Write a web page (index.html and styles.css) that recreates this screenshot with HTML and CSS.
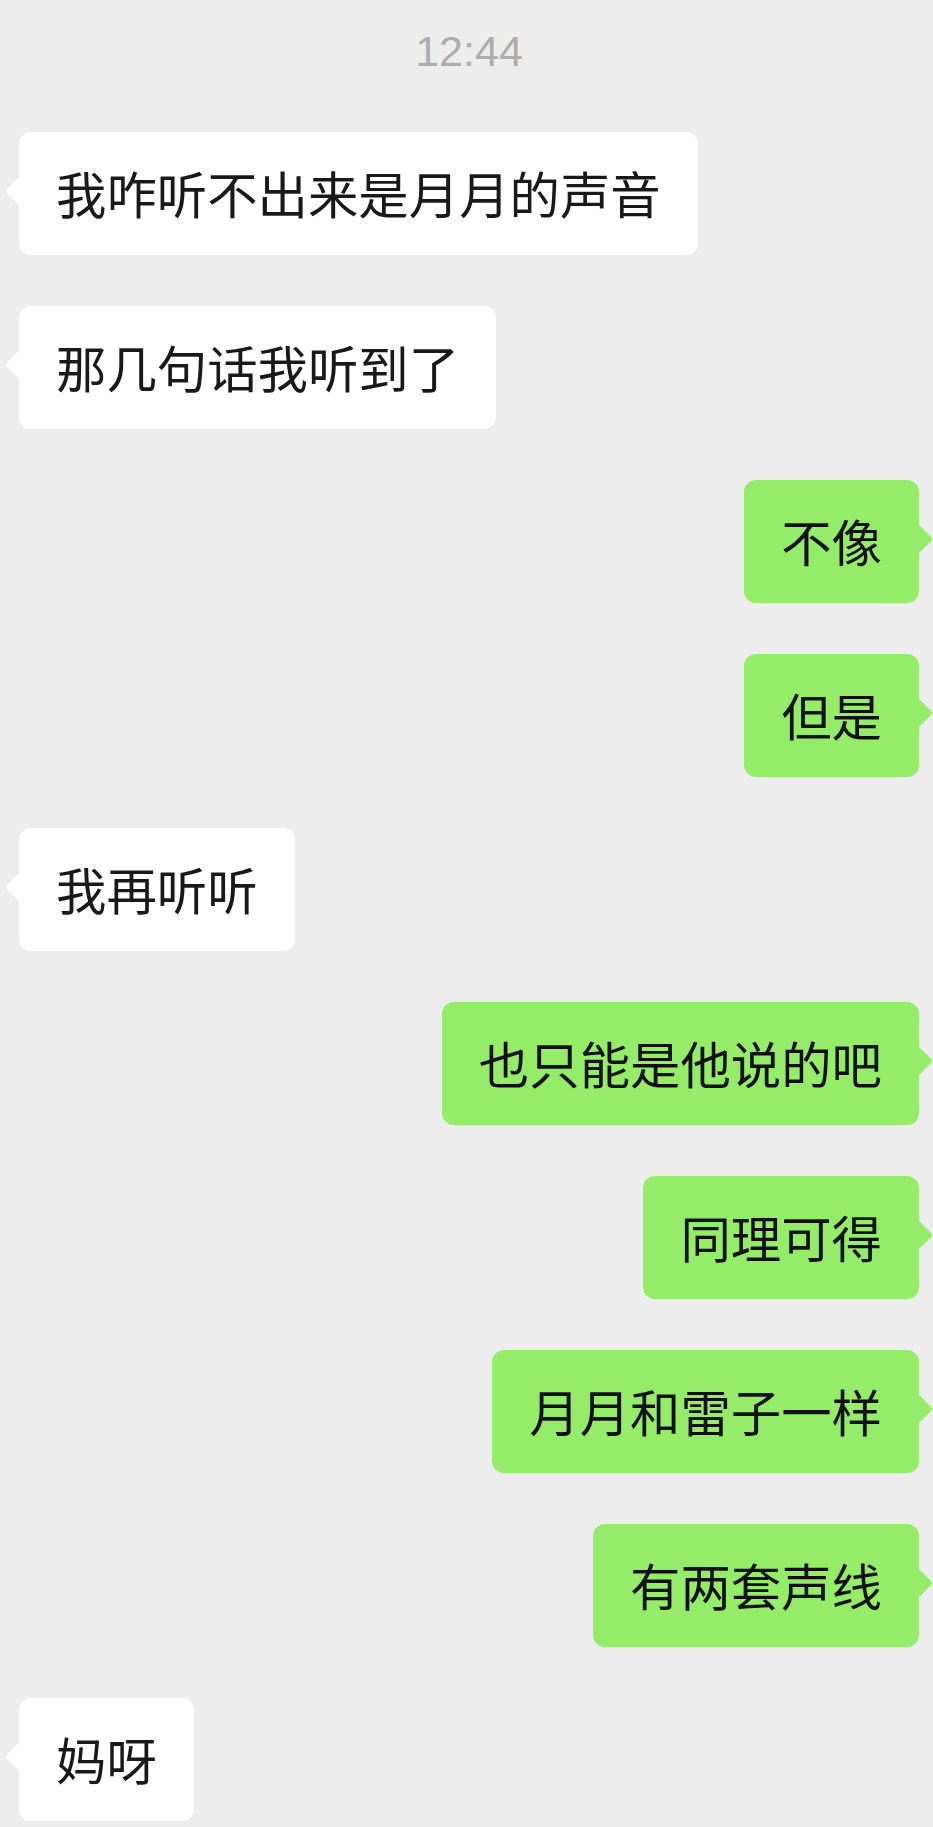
FILE: index.html
```html
<!DOCTYPE html>
<html lang="zh-CN">
<head>
    <meta charset="UTF-8">
    <meta name="viewport" content="width=device-width, initial-scale=1.0">
    <title>聊天</title>
    <link rel="stylesheet" href="styles.css">
</head>
<body>
    <main class="chat">
        <div class="time">12:44</div>

        <div class="msg left">我咋听不出来是月月的声音</div>
        <div class="msg left">那几句话我听到了</div>
        <div class="msg right">不像</div>
        <div class="msg right">但是</div>
        <div class="msg left">我再听听</div>
        <div class="msg right">也只能是他说的吧</div>
        <div class="msg right">同理可得</div>
        <div class="msg right">月月和雷子一样</div>
        <div class="msg right">有两套声线</div>
        <div class="msg left">妈呀</div>
    </main>
</body>
</html>
```

FILE: styles.css
```css
body {
    margin: 0;
    background: #ededed;
    font-family: "Noto Sans CJK SC", "Noto Sans", sans-serif;
    color: #191919;
    overflow: hidden;
}

.chat {
    display: flex;
    flex-direction: column;
    gap: 51px;
    padding: 26px 14px 0 19px;
}

.time {
    align-self: center;
    font-family: "Liberation Sans", Arial, sans-serif;
    font-size: 43px;
    line-height: 50px;
    color: #adadad;
    margin-bottom: 5px;
}

.msg {
    position: relative;
    display: flex;
    align-items: center;
    height: 123px;
    padding: 0 37px;
    font-size: 50.4px;
    line-height: 1;
    border-radius: 12px;
    white-space: nowrap;
}

/* 气泡小尖角 */
.msg::before {
    content: "";
    position: absolute;
    top: 49px;
    width: 20px;
    height: 20px;
    border-radius: 3px;
    transform: rotate(45deg);
    background: inherit;
}

.left {
    align-self: flex-start;
    background: #ffffff;
}

.left::before {
    left: -10px;
}

.right {
    align-self: flex-end;
    background: #95ec69;
    color: #111;
}

.right::before {
    right: -10px;
}
```
